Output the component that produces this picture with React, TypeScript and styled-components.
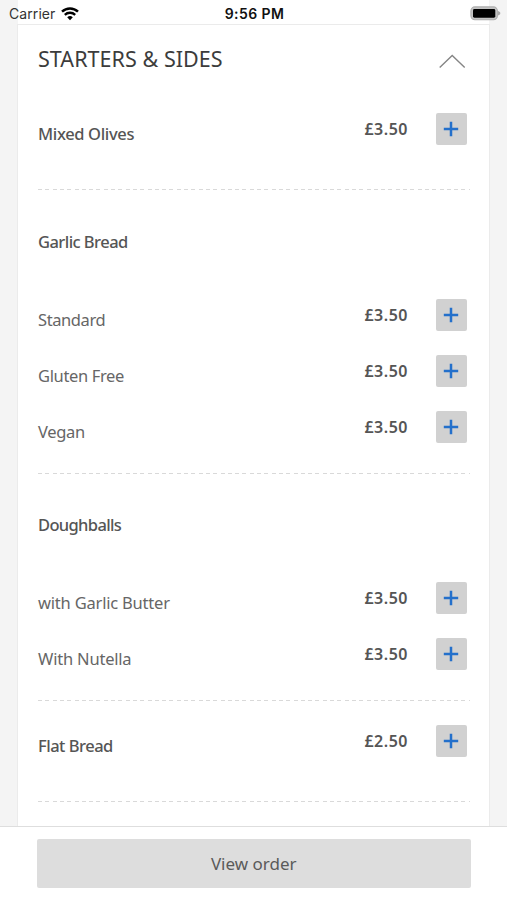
import React from "react";
import styled, { createGlobalStyle } from "styled-components";

const GlobalStyle = createGlobalStyle`
  *, *::before, *::after { box-sizing: border-box; }
  body { margin: 0; background: #f4f4f4; }
  button { font-family: inherit; border: 0; padding: 0; cursor: pointer; }
`;

const Screen = styled.main`
  display: flex;
  flex-direction: column;
  width: 507px;
  height: 900px;
  overflow: hidden;
  background: #f4f4f4;
  color: #555;
  font-family: "Noto Sans", sans-serif;
`;

const StatusBar = styled.header`
  display: grid;
  grid-template-columns: 1fr auto 1fr;
  align-items: center;
  flex: none;
  height: 24px;
  padding: 3px 6px 0 9px;
  color: #333;
  background: linear-gradient(90deg, #f4f4f4 18px, #fff 18px 489px, #f4f4f4 489px);
  font: 400 14px/20px Inter, sans-serif;
`;

const Carrier = styled.div`
  display: flex;
  align-items: center;
  gap: 6px;
  letter-spacing: 0.08px;
`;

const Clock = styled.time`
  margin-right: 1px;
  color: #111;
  font-weight: 600;
  letter-spacing: 0.4px;
`;

const Battery = styled.svg`
  justify-self: end;
`;

const MenuCard = styled.section`
  flex: 1;
  min-height: 0;
  margin: 0 17px;
  overflow: hidden;
  background: #fff;
  border: 1px solid #ebebeb;
  border-bottom: 0;
  padding: 0 19px 0 20px;
`;

const CategoryHeader = styled.div`
  display: flex;
  align-items: flex-start;
  justify-content: space-between;
  height: 64px;
  padding: 19px 4px 0 0;
`;

const CategoryTitle = styled.h1`
  margin: 0;
  color: #3c3c3c;
  font-size: 21.5px;
  line-height: 30px;
  font-weight: 400;
  letter-spacing: 0.05px;
`;

const Chevron = styled.svg`
  margin-top: 9px;
`;

const Group = styled.div<{ $titled: boolean; $tail: number }>`
  padding: ${(p) => (p.$titled ? 0 : 12)}px 0 ${(p) => p.$tail}px;
`;

const GroupTitle = styled.h2`
  height: 96.7px;
  margin: 0;
  padding-top: 39.7px;
  color: #555;
  font-size: 16.5px;
  line-height: 24px;
  font-weight: 500;
`;

const Divider = styled.div`
  height: 1px;
  width: 432px;
  background: repeating-linear-gradient(90deg, #d9d9d9 0 4px, #fff 4px 7.3px);
`;

const ItemRow = styled.div`
  display: grid;
  grid-template-columns: 1fr auto 31.5px;
  align-items: center;
  height: 56.1px;
  padding-right: 3px;
`;

const ItemName = styled.span<{ $strong: boolean }>`
  padding-top: 10px;
  color: ${(p) => (p.$strong ? "#555" : "#666")};
  font-size: 16.5px;
  line-height: 24px;
  font-weight: ${(p) => (p.$strong ? 500 : 400)};
`;

const Fit = styled.span<{ $track: number }>`
  letter-spacing: ${(p) => p.$track}px;
`;

const Price = styled.span`
  margin-right: 27.5px;
  color: #555;
  font-size: 16px;
  line-height: 24px;
  font-weight: 600;
  letter-spacing: 0.5px;
`;

const AddButton = styled.button`
  display: grid;
  place-items: center;
  width: 31.5px;
  height: 32px;
  border-radius: 2px;
  background: #d1d1d1;
`;

const Footer = styled.footer`
  flex: none;
  height: 74px;
  padding: 12px 37px 0;
  background: #fff;
  border-top: 1px solid #dedede;
`;

const OrderButton = styled.button`
  width: 433.5px;
  height: 49px;
  border-radius: 2px;
  background: #ddd;
  color: #5a5a5a;
  font-size: 17px;
`;

type Item = { name: string; price: string; track: number };
type MenuGroup = { title?: string; track?: number; tail: number; items: Item[] };

const groups: MenuGroup[] = [
  { tail: 31.9, items: [{ name: "Mixed Olives", price: "£3.50", track: -0.35 }] },
  {
    title: "Garlic Bread",
    track: -0.55,
    tail: 17.6,
    items: [
      { name: "Standard", price: "£3.50", track: -0.4 },
      { name: "Gluten Free", price: "£3.50", track: -0.35 },
      { name: "Vegan", price: "£3.50", track: -0.3 },
    ],
  },
  {
    title: "Doughballs",
    track: -0.65,
    tail: 17.2,
    items: [
      { name: "with Garlic Butter", price: "£3.50", track: -0.2 },
      { name: "With Nutella", price: "£3.50", track: -0.2 },
    ],
  },
  { tail: 32.1, items: [{ name: "Flat Bread", price: "£2.50", track: -0.5 }] },
];

export default function App() {
  return (
    <Screen>
      <GlobalStyle />
      <StatusBar>
        <Carrier>
          Carrier
          <svg width="18" height="14" viewBox="0 0 18 14" fill="none" stroke="#000">
            <path d="M1 4.7a11.7 11.7 0 0 1 16 0" strokeWidth="2.5" />
            <path d="M3.8 7.8a7.6 7.6 0 0 1 10.4 0" strokeWidth="2.3" />
            <path d="M6.2 10.3a4 4 0 0 1 5.6 0L9 13.2Z" fill="#000" stroke="none" />
          </svg>
        </Carrier>
        <Clock>9:56 PM</Clock>
        <Battery width="31" height="15" viewBox="0 0 31 15">
          <rect x="0.9" y="0.9" width="26.5" height="12.8" rx="4" fill="#c4c4c4" stroke="#adadad" strokeWidth="1.1" />
          <rect x="3" y="3" width="22.3" height="8.7" rx="1.4" fill="#000" />
          <path d="M28 5v4.6c1.7-.6 2.3-1.3 2.3-2.3S29.7 5.5 28 5Z" fill="#a9a9a9" />
        </Battery>
      </StatusBar>
      <MenuCard>
        <CategoryHeader>
          <CategoryTitle>STARTERS &amp; SIDES</CategoryTitle>
          <Chevron width="28" height="16" viewBox="0 0 28 16" fill="none" stroke="#858585" strokeWidth="1.4">
            <path d="m1.7 14.5 12.5-12 12.5 12" />
          </Chevron>
        </CategoryHeader>
        {groups.map((group, index) => (
          <React.Fragment key={index}>
            <Group $titled={!!group.title} $tail={group.tail}>
              {group.title && (
                <GroupTitle>
                  <Fit $track={group.track ?? 0}>{group.title}</Fit>
                </GroupTitle>
              )}
              {group.items.map((item) => (
                <ItemRow key={item.name}>
                  <ItemName $strong={!group.title}>
                    <Fit $track={item.track}>{item.name}</Fit>
                  </ItemName>
                  <Price>{item.price}</Price>
                  <AddButton aria-label={`Add ${item.name}`}>
                    <svg width="16" height="16" viewBox="0 0 16 16" stroke="#2470cb" strokeWidth="2.5">
                      <path d="M8 .8v14.4M.8 8h14.4" />
                    </svg>
                  </AddButton>
                </ItemRow>
              ))}
            </Group>
            <Divider />
          </React.Fragment>
        ))}
      </MenuCard>
      <Footer>
        <OrderButton>View order</OrderButton>
      </Footer>
    </Screen>
  );
}
